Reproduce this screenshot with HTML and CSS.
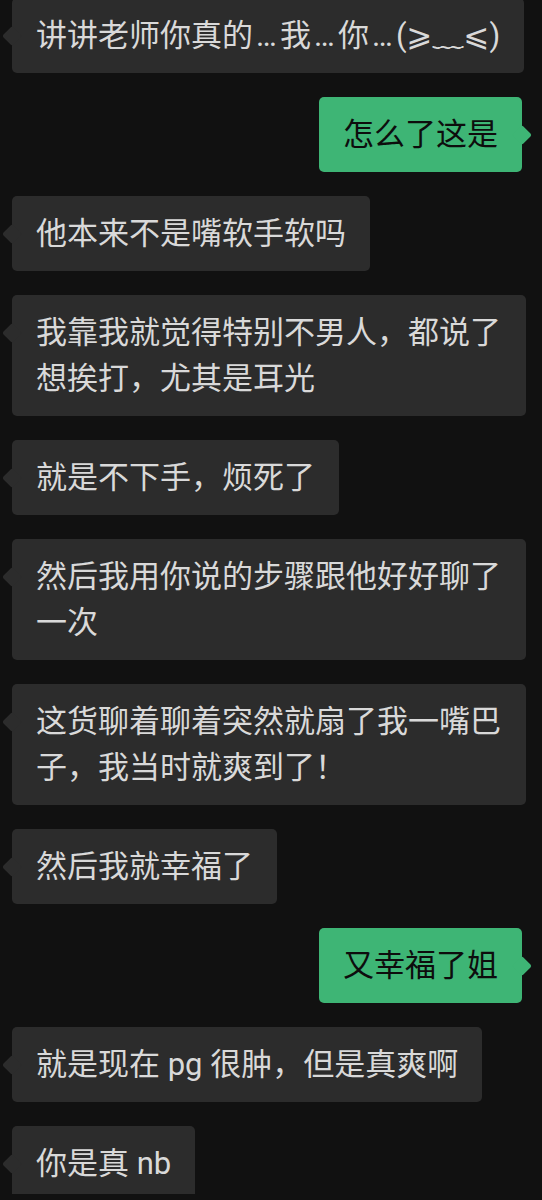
FILE: index.html
```html
<!DOCTYPE html>
<html lang="zh-CN">
<head>
  <meta charset="UTF-8" />
  <meta name="viewport" content="width=device-width, initial-scale=1.0" />
  <title>聊天</title>
  <link rel="stylesheet" href="styles.css">
</head>
<body>
  <div class="chat">
    <div class="msg in"><div class="bubble nowrap">讲讲老师你真的<span class="ell">…</span>我<span class="ell">…</span>你<span class="ell">…</span>(⩾﹏⩽)</div></div>
    <div class="msg out"><div class="bubble">怎么了这是</div></div>
    <div class="msg in"><div class="bubble">他本来不是嘴软手软吗</div></div>
    <div class="msg in"><div class="bubble">我靠我就觉得特别不男人，都说了想挨打，尤其是耳光</div></div>
    <div class="msg in"><div class="bubble">就是不下手，烦死了</div></div>
    <div class="msg in"><div class="bubble">然后我用你说的步骤跟他好好聊了一次</div></div>
    <div class="msg in"><div class="bubble">这货聊着聊着突然就扇了我一嘴巴子，我当时就爽到了！</div></div>
    <div class="msg in"><div class="bubble">然后我就幸福了</div></div>
    <div class="msg out"><div class="bubble">又幸福了姐</div></div>
    <div class="msg in"><div class="bubble">就是现在 pg 很肿，但是真爽啊</div></div>
    <div class="msg in"><div class="bubble">你是真 nb</div></div>
  </div>
</body>
</html>
```

FILE: styles.css
```css
* {
  box-sizing: border-box;
  margin: 0;
  padding: 0;
}

body {
  background: #111111;
  font-family: Roboto, "Noto Sans CJK SC", "DejaVu Sans", sans-serif;
}

.chat {
  height: 1194px;
  overflow: hidden;
  display: flex;
  flex-direction: column;
  gap: 24px;
  padding-left: 12px;
}

.msg {
  display: flex;
  flex-shrink: 0;
}

.msg:first-child {
  margin-top: -2px;
}

.msg.out {
  justify-content: flex-end;
  padding-right: 20px;
}

.bubble {
  position: relative;
  max-width: 514px;
  padding: 15px 24px 14px;
  border-radius: 5px;
  font-size: 31px;
  line-height: 46px;
  background: #2c2c2c;
  color: #d9d9d9;
}

.bubble.nowrap {
  white-space: nowrap;
}

.bubble::before {
  content: "";
  position: absolute;
  top: 31px;
  width: 14px;
  height: 14px;
  border-radius: 2px;
  background: inherit;
  transform: rotate(45deg);
}

.in .bubble::before {
  left: -7px;
}

.out .bubble {
  background: #3eb575;
  color: #0d0d0d;
}

.out .bubble::before {
  right: -7px;
}

.ell {
  display: inline-block;
  width: 0.87em;
  text-align: center;
}
```
